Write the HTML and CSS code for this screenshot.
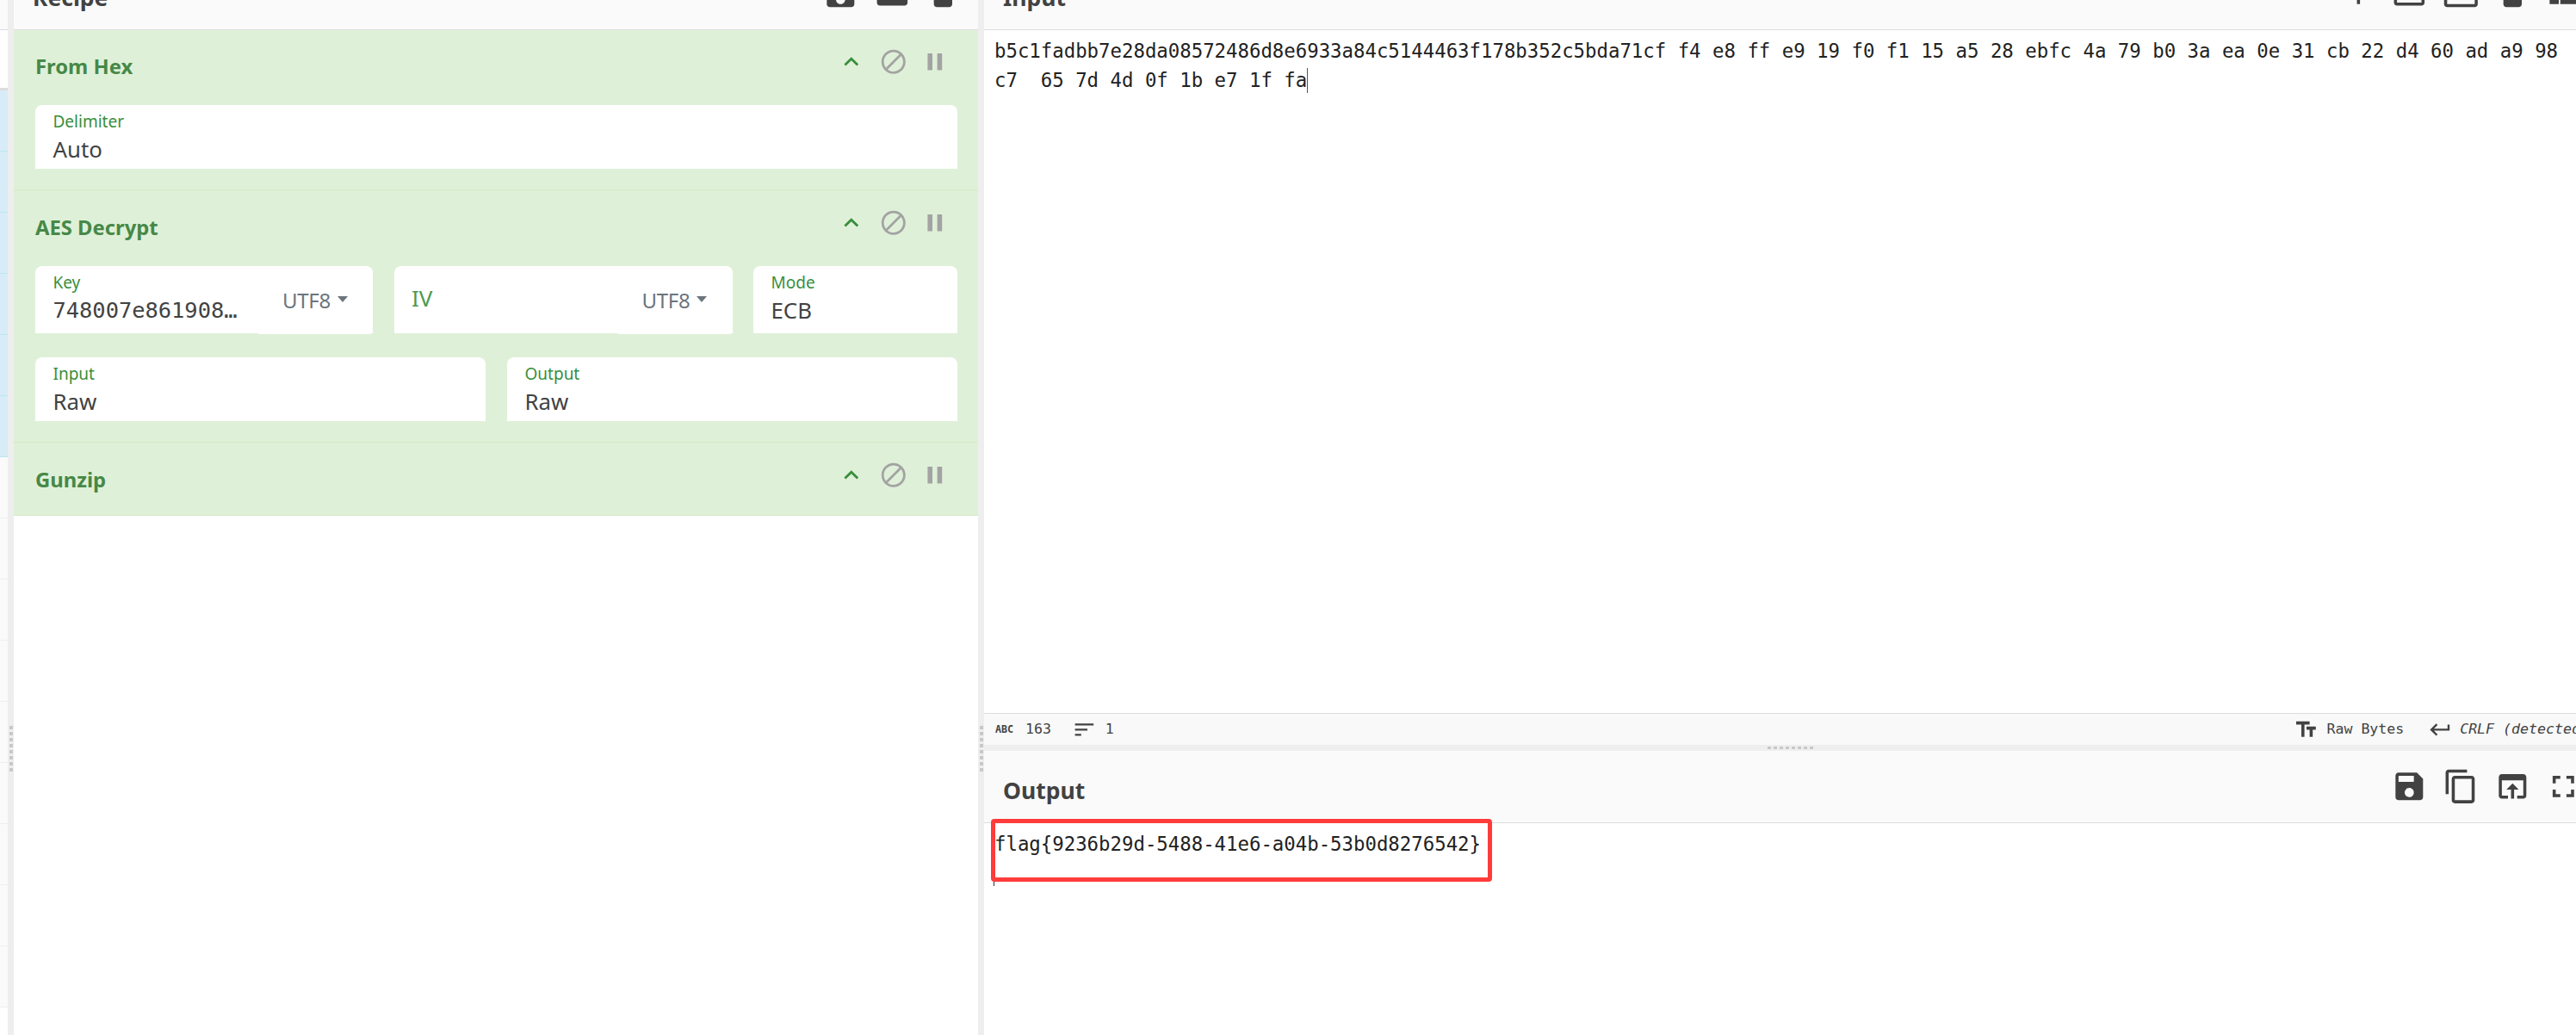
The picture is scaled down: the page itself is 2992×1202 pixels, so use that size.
FILE: index.html
```
<!DOCTYPE html>
<html lang="en">
<head>
<meta charset="utf-8">
<title>CyberChef</title>
<link rel="stylesheet" href="styles.css">
</head>
<body>
<svg class="defs" width="0" height="0" aria-hidden="true">
  <symbol id="i-save" viewBox="0 0 24 24"><path d="M17 3H5c-1.11 0-2 .9-2 2v14c0 1.1.89 2 2 2h14c1.1 0 2-.9 2-2V7l-4-4zm-5 16c-1.66 0-3-1.34-3-3s1.34-3 3-3 3 1.34 3 3-1.34 3-3 3zm3-10H5V5h10v4z"/></symbol>
  <symbol id="i-folder" viewBox="0 0 24 24"><path d="M10 4H4c-1.1 0-2 .9-2 2v12c0 1.1.9 2 2 2h16c1.1 0 2-.9 2-2V8c0-1.1-.9-2-2-2h-8l-2-2z"/></symbol>
  <symbol id="i-delete" viewBox="0 0 24 24"><path d="M6 19c0 1.1.9 2 2 2h8c1.1 0 2-.9 2-2V7H6v12zM19 4h-3.5l-1-1h-5l-1 1H5v2h14V4z"/></symbol>
  <symbol id="i-add" viewBox="0 0 24 24"><path d="M19 13h-6v6h-2v-6H5v-2h6V5h2v6h6v2z"/></symbol>
  <symbol id="i-folder-open" viewBox="0 0 24 24"><path d="M20 6h-8l-2-2H4c-1.1 0-1.99.9-1.99 2L2 18c0 1.1.9 2 2 2h16c1.1 0 2-.9 2-2V8c0-1.1-.9-2-2-2zm0 12H4V8h16v10z"/></symbol>
  <symbol id="i-input" viewBox="0 0 24 24"><path d="M21 3.01H3c-1.1 0-2 .9-2 2V9h2V4.99h18v14.03H3V15H1v4.01c0 1.1.9 1.98 2 1.98h18c1.1 0 2-.88 2-1.98v-14c0-1.11-.9-2-2-2zM11 16l4-4-4-4v3H1v2h10v3z"/></symbol>
  <symbol id="i-compact" viewBox="0 0 24 24"><path d="M3 19h6v-7H3v7zm7 0h12v-7H10v7zM3 5v6h19V5H3z"/></symbol>
  <symbol id="i-copy" viewBox="0 0 24 24"><path d="M16 1H4c-1.1 0-2 .9-2 2v14h2V3h12V1zm3 4H8c-1.1 0-2 .9-2 2v14c0 1.1.9 2 2 2h11c1.1 0 2-.9 2-2V7c0-1.1-.9-2-2-2zm0 16H8V7h11v14z"/></symbol>
  <symbol id="i-open" viewBox="0 0 24 24"><path d="M19 4H5c-1.11 0-2 .9-2 2v12c0 1.1.89 2 2 2h4v-2H5V8h14v10h-4v2h4c1.1 0 2-.9 2-2V6c0-1.1-.9-2-2-2zm-7 6l-4 4h3v6h2v-6h3l-4-4z"/></symbol>
  <symbol id="i-full" viewBox="0 0 24 24"><path d="M7 14H5v5h5v-2H7v-3zm-2-4h2V7h3V5H5v5zm12 7h-3v2h5v-5h-2v3zM14 5v2h3v3h2V5h-5z"/></symbol>
  <symbol id="i-up" viewBox="0 0 24 24"><path d="M7.41 15.41L12 10.83l4.59 4.58L18 14l-6-6-6 6z"/></symbol>
  <symbol id="i-block" viewBox="0 0 24 24"><path d="M12 2C6.48 2 2 6.48 2 12s4.48 10 10 10 10-4.48 10-10S17.52 2 12 2zM4 12c0-4.42 3.58-8 8-8 1.85 0 3.55.63 4.9 1.69L5.69 16.9C4.63 15.55 4 13.85 4 12zm8 8c-1.85 0-3.55-.63-4.9-1.69L18.31 7.1C19.37 8.45 20 10.15 20 12c0 4.42-3.58 8-8 8z"/></symbol>
  <symbol id="i-pause" viewBox="0 0 24 24"><path d="M6 19h4V5H6v14zm8-14v14h4V5h-4z"/></symbol>
  <symbol id="i-sort" viewBox="0 0 24 24"><path d="M3 18h6v-2H3v2zM3 6v2h18V6H3zm0 7h12v-2H3v2z"/></symbol>
  <symbol id="i-tt" viewBox="0 0 24 24"><path d="M2.5 4v3h5v12h3V7h5V4h-13zm19 5h-9v3h3v7h3v-7h3V9z"/></symbol>
  <symbol id="i-return" viewBox="0 0 24 24"><path d="M19 7v4H5.83l3.58-3.59L8 6l-6 6 6 6 1.41-1.41L5.83 13H21V7z"/></symbol>
</svg>

<div class="app">
  <aside class="strip">
    <div class="strip-head"></div>
    <div class="strip-top"></div>
    <div class="strip-row blue"></div><div class="strip-row blue"></div><div class="strip-row blue"></div>
    <div class="strip-row blue"></div><div class="strip-row blue"></div><div class="strip-row blue"></div>
    <div class="strip-row"></div><div class="strip-row"></div><div class="strip-row"></div>
    <div class="strip-row"></div><div class="strip-row"></div><div class="strip-row"></div>
    <div class="strip-row"></div><div class="strip-row"></div><div class="strip-row"></div>
  </aside>
  <div class="gutter"><div class="vdots"></div></div>

  <section class="recipe">
    <header class="head">
      <h2 class="title">Recipe</h2>
      <div class="tools">
        <svg class="tool"><use href="#i-save"/></svg>
        <svg class="tool"><use href="#i-folder"/></svg>
        <svg class="tool"><use href="#i-delete"/></svg>
      </div>
    </header>
    <div class="ops">
      <article class="op">
        <div class="op-head">
          <h3 class="op-title">From Hex</h3>
          <div class="op-tools">
            <svg class="op-tool up"><use href="#i-up"/></svg>
            <svg class="op-tool"><use href="#i-block"/></svg>
            <svg class="op-tool"><use href="#i-pause"/></svg>
          </div>
        </div>
        <div class="op-body">
          <div class="field tall"><div class="field-main"><div class="label">Delimiter</div><div class="value">Auto</div></div></div>
        </div>
      </article>
      <article class="op">
        <div class="op-head">
          <h3 class="op-title">AES Decrypt</h3>
          <div class="op-tools">
            <svg class="op-tool up"><use href="#i-up"/></svg>
            <svg class="op-tool"><use href="#i-block"/></svg>
            <svg class="op-tool"><use href="#i-pause"/></svg>
          </div>
        </div>
        <div class="op-body">
          <div class="row-three">
            <div class="field">
              <div class="field-main"><div class="label">Key</div><div class="value mono">748007e861908…</div></div>
              <div class="enc">UTF8<span class="caret"></span></div>
            </div>
            <div class="field">
              <div class="field-main"><div class="placeholder">IV</div></div>
              <div class="enc">UTF8<span class="caret"></span></div>
            </div>
            <div class="field"><div class="field-main"><div class="label">Mode</div><div class="value">ECB</div></div></div>
          </div>
          <div class="row-two">
            <div class="field tall"><div class="field-main"><div class="label">Input</div><div class="value">Raw</div></div></div>
            <div class="field tall"><div class="field-main"><div class="label">Output</div><div class="value">Raw</div></div></div>
          </div>
        </div>
      </article>
      <article class="op">
        <div class="op-head">
          <h3 class="op-title">Gunzip</h3>
          <div class="op-tools">
            <svg class="op-tool up"><use href="#i-up"/></svg>
            <svg class="op-tool"><use href="#i-block"/></svg>
            <svg class="op-tool"><use href="#i-pause"/></svg>
          </div>
        </div>
      </article>
    </div>
  </section>
  <div class="gutter"><div class="vdots"></div></div>

  <section class="io">
    <div class="input-pane">
      <header class="head">
        <h2 class="title">Input</h2>
        <div class="tools">
          <svg class="tool"><use href="#i-add"/></svg>
          <svg class="tool"><use href="#i-folder-open"/></svg>
          <svg class="tool"><use href="#i-input"/></svg>
          <svg class="tool"><use href="#i-delete"/></svg>
          <svg class="tool"><use href="#i-compact"/></svg>
        </div>
      </header>
      <div class="text-area">
        <div class="line">b5c1fadbb7e28da08572486d8e6933a84c5144463f178b352c5bda71cf f4 e8 ff e9 19 f0 f1 15 a5 28 ebfc 4a 79 b0 3a ea 0e 31 cb 22 d4 60 ad a9 98</div>
        <div class="line">c7  65 7d 4d 0f 1b e7 1f fa<span class="cursor"></span></div>
      </div>
      <footer class="status">
        <div class="status-group">
          <span class="abc">ABC</span><span class="stat">163</span>
          <svg class="status-icon sort"><use href="#i-sort"/></svg><span class="stat">1</span>
        </div>
        <div class="status-group">
          <svg class="status-icon"><use href="#i-tt"/></svg><span class="stat raw">Raw Bytes</span>
          <svg class="status-icon ret"><use href="#i-return"/></svg><span class="stat crlf">CRLF (detected)</span>
        </div>
      </footer>
    </div>
    <div class="hsplit"><div class="hdots"></div></div>
    <div class="output-pane">
      <header class="head">
        <h2 class="title">Output</h2>
        <div class="tools">
          <svg class="tool"><use href="#i-save"/></svg>
          <svg class="tool"><use href="#i-copy"/></svg>
          <svg class="tool"><use href="#i-open"/></svg>
          <svg class="tool"><use href="#i-full"/></svg>
        </div>
      </header>
      <div class="text-area">
        <div class="line">flag{9236b29d-5488-41e6-a04b-53b0d8276542}</div>
      </div>
      <div class="out-cursor"></div>
      <div class="highlight"></div>
    </div>
  </section>
</div>
</body>
</html>
```

FILE: styles.css
```
* { box-sizing: border-box; }
html, body { margin: 0; padding: 0; height: 100%; overflow: hidden; background: #fff; }
body { font-family: "Noto Sans", "Open Sans", sans-serif; color: #424242; }
.defs { position: absolute; }

.app { display: flex; width: 3018px; height: 1251px; margin-top: -49px; }

.strip { width: 9px; flex: none; }
.strip-head { height: 84px; background: #fafafa; border-bottom: 1px solid #ddd; }
.strip-top { height: 70px; background: #fff; border-bottom: 3px solid #ddd; }
.strip-row { height: 71px; background: #fafafa; border-bottom: 1px solid #eee; }
.strip-row.blue { background: #d7ecf6; border-bottom-color: #bce6f1; }

.gutter { width: 7px; flex: none; background: #eee; padding: 892px 1px 0 2px; }
.vdots { width: 4px; height: 53px; background: repeating-linear-gradient(to bottom, #c8c8c8 0 4px, transparent 4px 7px); }

.recipe { width: 1120px; flex: none; display: flex; flex-direction: column; background: #fff; }
.head { display: flex; justify-content: space-between; align-items: flex-start; height: 84px; flex: none; padding: 0 19px 0 22px; background: #fafafa; border-bottom: 1px solid #ddd; position: relative; z-index: 1; }
.title { margin: 28px 0 0; font-size: 26.5px; line-height: 36px; font-weight: 700; color: #424242; }
.tools { display: flex; gap: 17px; margin-top: 20px; }
.tool { width: 42.67px; height: 42.67px; fill: #424242; flex: none; }

.ops { margin-top: -1px; }
.op { background: #dff0d8; border-bottom: 1px solid #d6e9c6; }
.op-head { height: 84px; display: flex; justify-content: space-between; align-items: flex-start; padding: 0 33px 0 25px; }
.op-title { margin: 27px 0 0; font-size: 23.8px; line-height: 32px; font-weight: 700; color: #468847; }
.op-tools { display: flex; gap: 15px; margin-top: 21px; }
.op-tool { width: 33.6px; height: 33.6px; fill: #a3a3a3; flex: none; }
.op-tool.up { fill: #388e3c; }
.op-body { padding: 4px 24px 24px 25px; display: flex; flex-direction: column; gap: 28px; }
.row-three { display: grid; grid-template-columns: 392px 393px 1fr; column-gap: 24.5px; }
.row-two { display: grid; grid-template-columns: 1fr 1fr; column-gap: 25px; }

.field { display: flex; height: 78px; background: #fff; border-radius: 8px 8px 0 0; }
.field.tall { height: 74px; }
.field-main { flex: 1; min-width: 0; padding: 6px 0 0 20.5px; }
.label { font-size: 19px; line-height: 26px; color: #388e3c; }
.value { font-size: 25.8px; line-height: 38px; color: #424242; white-space: nowrap; }
.value.mono { font-family: "DejaVu Sans Mono", monospace; font-size: 25.4px; }
.placeholder { margin-top: 12px; font-size: 26px; line-height: 38px; color: #4c9a50; }
.enc { width: 133px; height: 79px; flex: none; display: flex; align-items: center; padding-left: 28px; background: #fff; border-radius: 0 8px 4px 0; font-size: 24px; letter-spacing: -0.3px; color: #6c757d; }
.caret { width: 0; height: 0; margin: 0 0 2px 8px; border-style: solid; border-width: 7px 6.5px 0 6.5px; border-color: #6c757d transparent transparent transparent; }

.io { flex: 1; min-width: 0; display: flex; flex-direction: column; }
.input-pane { height: 914px; flex: none; display: flex; flex-direction: column; }
.text-area { flex: 1; padding: 7px 0 0 12px; font-family: "DejaVu Sans Mono", monospace; font-size: 22.35px; line-height: 34px; color: #222; background: #fff; }
.line { white-space: pre; height: 34px; }
.cursor { display: inline-block; width: 1px; height: 29px; background: #555; vertical-align: -7px; }

.status { height: 37px; flex: none; display: flex; justify-content: space-between; align-items: center; padding: 0 11px 0 13px; background: #f9f9f9; border-top: 1px solid #ddd; font-family: "DejaVu Sans Mono", monospace; font-size: 16.6px; color: #424242; }
.status-group { display: flex; align-items: center; }
.abc { width: 21px; font-size: 11.7px; font-weight: 700; color: #424242; margin-right: 14px; }
.stat { line-height: 28px; }
.status-icon { width: 28.8px; height: 28.8px; fill: #424242; flex: none; }
.status-icon.sort { margin: 0 10px 0 24px; }
.raw { margin-left: 10px; }
.status-icon.ret { margin: 0 8px 0 28px; }
.crlf { font-style: italic; }

.hsplit { height: 7px; flex: none; background: #eee; display: flex; justify-content: center; padding-top: 2px; }
.hdots { width: 55px; height: 3px; background: repeating-linear-gradient(to right, #c8c8c8 0 4px, transparent 4px 7px); }

.output-pane { flex: 1; position: relative; display: flex; flex-direction: column; }
.highlight { position: absolute; z-index: 2; left: 7.5px; top: 79px; width: 582px; height: 73px; border: 5px solid #ff3b3b; border-radius: 4px; }
.out-cursor { position: absolute; left: 11px; top: 152px; width: 1px; height: 5px; background: #333; }
```
